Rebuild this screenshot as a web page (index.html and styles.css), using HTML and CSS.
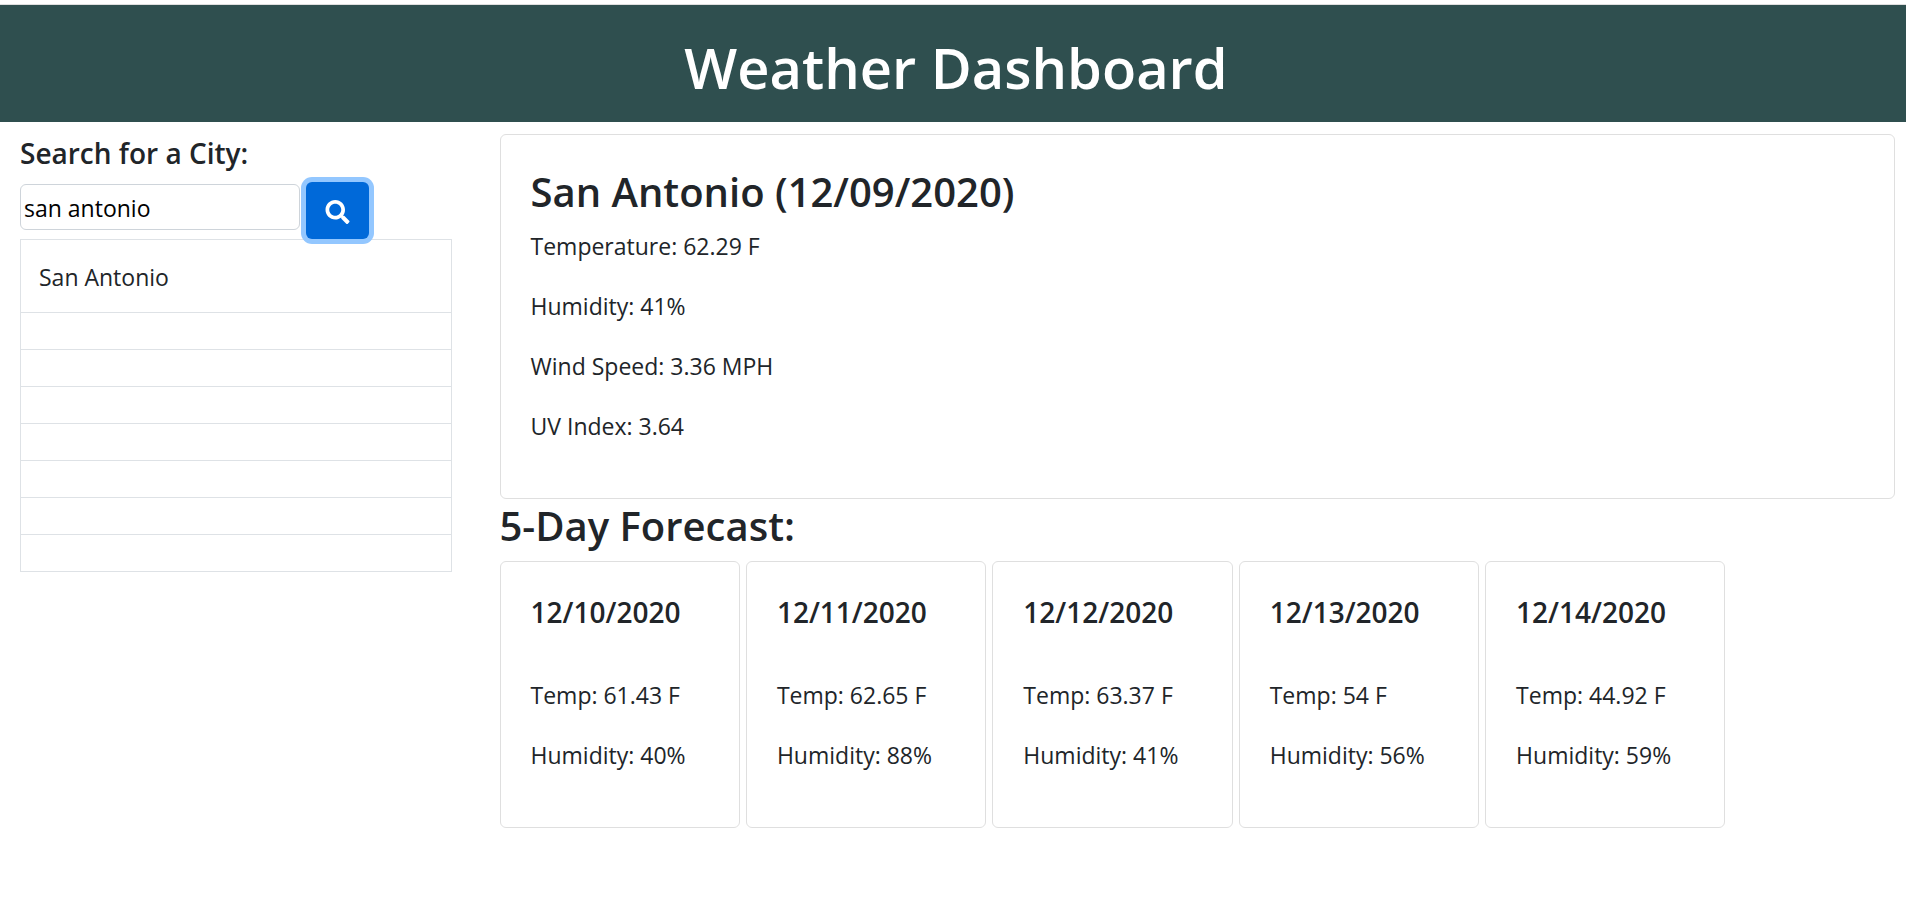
FILE: index.html
```html
<!DOCTYPE html>
<html lang="en">
<head>
  <meta charset="utf-8">
  <meta name="viewport" content="width=device-width, initial-scale=1">
  <title>Weather Dashboard</title>
  <link rel="stylesheet" href="styles.css">
</head>
<body>
  <header class="banner">
    <h1 class="banner-title">Weather Dashboard</h1>
  </header>
  <div class="layout">
    <aside class="sidebar">
      <form class="search">
        <label class="search-label" for="city">Search for a City:</label>
        <div class="search-row">
          <input class="search-input" id="city" type="text" value="san antonio">
          <button class="search-button" type="button" aria-label="Search">
            <svg class="search-icon" viewBox="0 0 512 512" aria-hidden="true"><path fill="currentColor" d="M505 442.700L405.300 343c-4.500-4.500-10.600-7-17-7H372c27.600-35.300 44-79.700 44-128C416 93.100 322.900 0 208 0S0 93.100 0 208s93.100 208 208 208c48.300 0 92.700-16.400 128-44v16.300c0 6.400 2.500 12.500 7 17l99.700 99.700c9.400 9.400 24.600 9.400 33.900 0l28.300-28.300c9.400-9.400 9.400-24.600.1-34zM208 336c-70.700 0-128-57.200-128-128 0-70.700 57.200-128 128-128 70.700 0 128 57.200 128 128 0 70.700-57.200 128-128 128z"/></svg>
          </button>
        </div>
      </form>
      <table class="history">
        <tbody>
          <tr><td>San Antonio</td></tr>
          <tr><td></td></tr>
          <tr><td></td></tr>
          <tr><td></td></tr>
          <tr><td></td></tr>
          <tr><td></td></tr>
          <tr><td></td></tr>
          <tr><td></td></tr>
        </tbody>
      </table>
    </aside>
    <main class="content">
      <section class="card">
        <h2 class="heading">San Antonio (12/09/2020)</h2>
        <p class="reading">Temperature: 62.29 F</p>
        <p class="reading">Humidity: 41%</p>
        <p class="reading">Wind Speed: 3.36 MPH</p>
        <p class="reading">UV Index: 3.64</p>
      </section>
      <h2 class="heading">5-Day Forecast:</h2>
      <div class="forecast">
        <article class="card">
          <h3 class="day">12/10/2020</h3>
          <p class="reading">Temp: 61.43 F</p>
          <p class="reading">Humidity: 40%</p>
        </article>
        <article class="card">
          <h3 class="day">12/11/2020</h3>
          <p class="reading">Temp: 62.65 F</p>
          <p class="reading">Humidity: 88%</p>
        </article>
        <article class="card">
          <h3 class="day">12/12/2020</h3>
          <p class="reading">Temp: 63.37 F</p>
          <p class="reading">Humidity: 41%</p>
        </article>
        <article class="card">
          <h3 class="day">12/13/2020</h3>
          <p class="reading">Temp: 54 F</p>
          <p class="reading">Humidity: 56%</p>
        </article>
        <article class="card">
          <h3 class="day">12/14/2020</h3>
          <p class="reading">Temp: 44.92 F</p>
          <p class="reading">Humidity: 59%</p>
        </article>
      </div>
    </main>
  </div>
</body>
</html>
```

FILE: styles.css
```css
*,
*::before,
*::after {
  box-sizing: border-box;
}

body {
  margin: 0;
  padding-top: 4px;
  background: #fff;
  color: #212529;
  font-family: "Open Sans", "Noto Sans", sans-serif;
  font-size: 23px;
  line-height: 36px;
}

h1,
h2,
h3,
p {
  margin: 0;
}

.banner {
  padding: 27px 0 19px 6px;
  border-top: 1px solid #dfdfdf;
  background: #2f4f4f;
  color: #fff;
  text-align: center;
}

.banner-title {
  font-size: 56px;
  font-weight: 600;
  line-height: 71px;
}

.layout {
  display: grid;
  grid-template-columns: minmax(0, 1fr) minmax(0, 3fr);
  padding-top: 12px;
}

.sidebar {
  padding: 0 25px 0 20px;
}

.search-label {
  display: block;
  margin-bottom: 10px;
  font-size: 28px;
  font-weight: 600;
  line-height: 38px;
}

.search-row {
  display: flex;
  gap: 6px;
}

.search-input {
  width: 280px;
  height: 46px;
  margin: 2px 0 0;
  padding: 2px 3px 0;
  border: 1px solid #ced4da;
  border-radius: 6px;
  background: #fff;
  color: #000;
  font: inherit;
}

.search-button {
  padding: 18px 19px 15px;
  border: 0;
  border-radius: 6px;
  background: #0069d9;
  box-shadow: 0 0 0 5px #93c7ff;
  color: #fff;
}

.search-icon {
  display: block;
  width: 25px;
  height: 24px;
}

.history {
  width: 100%;
  border-collapse: collapse;
}

.history td {
  padding: 19px 18px 17px;
  border: 1px solid #dee2e6;
}

.content {
  padding: 0 11px 0 23px;
}

.card {
  padding: 30px;
  border: 1px solid #dfdfdf;
  border-radius: 6px;
}

.heading {
  margin-bottom: 8px;
  font-size: 40px;
  font-weight: 600;
  line-height: 54px;
}

.card .heading {
  margin-bottom: 9px;
}

.reading {
  margin-bottom: 24px;
}

.forecast {
  display: grid;
  grid-template-columns: repeat(5, minmax(0, 1fr));
  gap: 6px;
  max-width: 1226px;
}

.day {
  margin-bottom: 45px;
  font-size: 28px;
  font-weight: 600;
  line-height: 40px;
}
```
